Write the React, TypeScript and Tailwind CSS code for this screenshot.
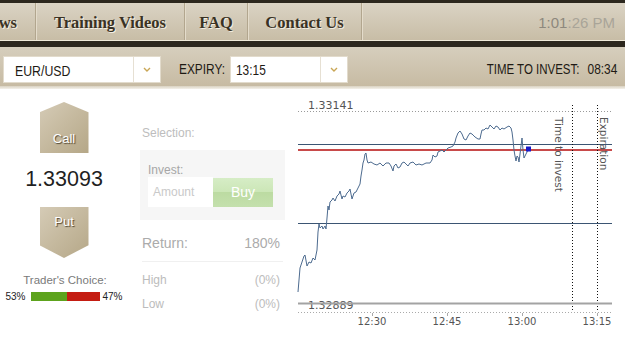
import React from "react";

const pts: [number, number][] = [
  [298, 292], [299, 280], [300, 268], [302, 262], [304, 256], [305, 255], [307, 266], [309, 262], [311, 263], [313, 258], [315, 260], [317, 250], [318, 232], [319, 224], [320, 228], [322, 226], [323, 229], [325, 226], [326, 229], [327, 218], [328, 206], [329, 210], [330, 202], [332, 200], [333, 198], [335, 201], [337, 196], [339, 194], [340, 191], [342, 199], [343, 196], [345, 197], [347, 193], [349, 191], [350, 189], [352, 199], [354, 193], [356, 192], [358, 188], [360, 184], [361, 176], [362, 170], [363, 163], [364, 160], [365, 154], [366, 153], [367, 160], [368, 163], [371, 162], [374, 164], [377, 165], [380, 163], [383, 166], [386, 163], [389, 163], [391, 166], [393, 171], [394, 166], [396, 164], [398, 168], [400, 167], [402, 163], [404, 162], [406, 164], [408, 166], [410, 163], [413, 162], [416, 165], [419, 164], [422, 165], [426, 163], [430, 163], [432, 160], [433, 155], [435, 157], [437, 156], [438, 152], [440, 151], [442, 150], [444, 152], [446, 150], [448, 148], [451, 147], [453, 146], [455, 142], [456, 138], [458, 133], [460, 131], [462, 134], [464, 139], [466, 140], [468, 136], [470, 133], [472, 134], [475, 137], [478, 139], [480, 139], [481, 134], [482, 130], [484, 130], [486, 128], [488, 129], [490, 125], [492, 127], [494, 129], [496, 126], [498, 127], [500, 130], [502, 128], [504, 129], [507, 127], [509, 126], [511, 128], [512, 132], [513, 140], [514, 150], [515, 156], [516, 161], [517, 156], [518, 157], [519, 162], [520, 154], [521, 146], [522, 138], [523, 150], [524, 158], [525, 156], [526, 154], [527, 152], [528, 150],
];

function Chevron() {
  return (
    <svg width="8" height="5" viewBox="0 0 8 5">
      <polyline points="1,1 4,4 7,1" fill="none" stroke="#c9a655" strokeWidth="1.4" />
    </svg>
  );
}

function Chart() {
  const f = "DejaVu Sans, sans-serif";
  return (
    <svg width="340" height="251" className="block">
      <g transform="translate(-285,-89)">
        <text x="308" y="109" fontSize="11" fill="#555" fontFamily={f}>1.33141</text>
        <line x1="298" x2="612" y1="111.5" y2="111.5" stroke="#9a9a9a" strokeDasharray="1 2" />
        <line x1="298" x2="612" y1="144.5" y2="144.5" stroke="#3b5573" />
        <line x1="298" x2="612" y1="223.5" y2="223.5" stroke="#3b5573" />
        <line x1="298" x2="612" y1="150" y2="150" stroke="#c84a4a" strokeWidth="2" />
        <line x1="572.5" x2="572.5" y1="105" y2="311" stroke="#111" strokeDasharray="1 2" />
        <line x1="597.5" x2="597.5" y1="105" y2="311" stroke="#111" strokeDasharray="1 2" />
        <text transform="translate(555,117) rotate(90)" fontSize="10.5" fill="#555" fontFamily={f}>Time to invest</text>
        <text transform="translate(600,117) rotate(90)" fontSize="10.5" fill="#555" fontFamily={f}>Expiration</text>
        <polyline points={pts.map((p) => p.join(",")).join(" ")} fill="none" stroke="#4d6b8f" strokeWidth="1" />
        <rect x="526" y="146.5" width="5" height="5" fill="#1818c8" />
        <text x="308" y="309" fontSize="11" fill="#555" fontFamily={f}>1.32889</text>
        <line x1="298" x2="612" y1="303.5" y2="303.5" stroke="#a3a3a3" strokeWidth="2" />
        <line x1="298" x2="612" y1="312.5" y2="312.5" stroke="#aaa" strokeDasharray="1 2" />
        {[372.5, 447.5, 522.5, 597.5].map((x) => (
          <line key={x} x1={x} x2={x} y1="313" y2="316" stroke="#aaa" />
        ))}
        {[
          [372, "12:30"],
          [447, "12:45"],
          [522, "13:00"],
          [597, "13:15"],
        ].map(([x, t]) => (
          <text key={t as string} x={x as number} y="324.5" fontSize="10" fill="#555" textAnchor="middle" fontFamily={f}>
            {t}
          </text>
        ))}
      </g>
    </svg>
  );
}

export default function App() {
  const navItem = "h-full flex items-center justify-center pt-[4px] border-r border-[#b2a68e] shadow-[1px_0_0_#e4dccb]";
  return (
    <div className="w-[625px] h-[340px] overflow-hidden bg-white font-['Liberation_Sans',Arial,sans-serif]">
      <div className="h-[3px] bg-[#2c271e]" />
      <nav className="h-[37px] flex items-center bg-gradient-to-b from-[#dad3c4] to-[#c8bda6] font-['Liberation_Serif',serif] font-bold text-[16.5px] text-[#3a3224] [text-shadow:1px_1px_0_#f3eee3]">
        <div className={`${navItem} w-[36px] overflow-hidden justify-end pr-[18px]`}>
          <span className="whitespace-nowrap">News</span>
        </div>
        <div className={`${navItem} w-[149px]`}>Training Videos</div>
        <div className={`${navItem} w-[63px]`}>FAQ</div>
        <div className={`${navItem} w-[114px]`}>Contact Us</div>
        <div className="ml-auto pr-[10px] pt-[3px] font-['Liberation_Sans',Arial,sans-serif] font-normal text-[15px] [text-shadow:none]">
          <span className="text-[#8d887d]">1:01</span>
          <span className="text-[#a9a498]">:26 PM</span>
        </div>
      </nav>
      <div className="h-[1px] bg-[#efe9d9]" />
      <div className="h-[6px] bg-[#2c271e]" />
      <div className="h-[39px] flex items-start pt-[9px] bg-gradient-to-b from-[#d6cebd] to-[#c7bba3] text-[#1e1a14]">
        <div className="ml-[3px] flex h-[27px] bg-white border border-[#e2dbcc]">
          <div className="w-[129px] flex items-center pl-[11px] pt-[3px] text-[15px] overflow-hidden">
            <span className="inline-block whitespace-nowrap origin-left scale-x-[0.82]">EUR/USD</span>
          </div>
          <div className="w-[27px] flex items-center justify-center border-l border-[#e6e0d3]">
            <Chevron />
          </div>
        </div>
        <div className="ml-[18px] w-[51px] h-[27px] flex items-center pt-[1px] text-[14.5px]">
          <span className="inline-block whitespace-nowrap origin-left scale-x-[0.82]">EXPIRY:</span>
        </div>
        <div className="flex h-[27px] bg-white border border-[#e2dbcc]">
          <div className="w-[89px] flex items-center pl-[5px] pt-[3px] text-[14.5px]">
            <span className="inline-block whitespace-nowrap origin-left scale-x-[0.82]">13:15</span>
          </div>
          <div className="w-[27px] flex items-center justify-center border-l border-[#e6e0d3]">
            <Chevron />
          </div>
        </div>
        <div className="ml-auto h-[27px] flex items-center pt-[1px] pr-[8px] text-[14px]">
          <span className="inline-block whitespace-nowrap origin-right scale-x-[0.82]">
            <span>TIME TO INVEST:</span>
            <span className="ml-[10px] text-[14.5px]">08:34</span>
          </span>
        </div>
      </div>
      <div className="h-[3px] bg-gradient-to-b from-[#d9d1c1] to-[#f4f1ea]" />
      <div className="flex">
        <div className="w-[128px] flex flex-col items-center">
          <div className="mt-[13px] w-[49px] h-[51px] bg-gradient-to-br from-[#d5cbb6] to-[#b5a787] [clip-path:polygon(50%_0,100%_20%,100%_100%,0_100%,0_20%)] flex justify-center pt-[29px] text-[13px] leading-[15px] text-white [text-shadow:1px_1px_1px_#4f4430]">
            Call
          </div>
          <div className="mt-[13.5px] h-[24px] leading-[24px] text-[21.5px] text-[#1f1f1f]">1.33093</div>
          <div className="mt-[16.5px] w-[49px] h-[51px] bg-gradient-to-br from-[#d5cbb6] to-[#b5a787] [clip-path:polygon(0_0,100%_0,100%_75%,50%_100%,0_75%)] flex justify-center pt-[7px] text-[13px] leading-[15px] text-white [text-shadow:1px_1px_1px_#4f4430]">
            Put
          </div>
          <div className="mt-[15px] ml-[2px] h-[14px] leading-[14px] text-[11.5px] text-[#7a7a7a]">Trader&apos;s Choice:</div>
          <div className="mt-[4px] flex items-center text-[10px] leading-[11px] text-[#222]">
            <span>53%</span>
            <div className="ml-[5px] w-[36px] h-[9px] bg-[#5da31d]" />
            <div className="w-[33px] h-[9px] bg-[#c41d12]" />
            <span className="ml-[3px]">47%</span>
          </div>
        </div>
        <div className="ml-[12px] w-[145px] flex flex-col">
          <div className="mt-[37px] ml-[2px] h-[14px] leading-[14px] text-[12px] text-[#bdbdbd]">Selection:</div>
          <div className="mt-[10px] h-[70px] bg-[#f6f6f6] pl-[8px] pt-[13px]">
            <div className="h-[14px] leading-[14px] text-[12px] text-[#a6a6a6]">Invest:</div>
            <div className="flex h-[30px]">
              <div className="w-[65px] bg-white flex items-center pl-[5px] text-[12px] text-[#c9c9c9]">Amount</div>
              <div className="mt-[1px] w-[60px] h-[29px] flex items-center justify-center text-[14px] text-white bg-[linear-gradient(#d6edc6_0%,#cbe6b6_50%,#bcdba2_50%,#c4e0ad_100%)]">
                Buy
              </div>
            </div>
          </div>
          <div className="mt-[15px] mx-[2px] flex justify-between h-[16px] leading-[16px] text-[14px] text-[#ababab]">
            <span>Return:</span>
            <span className="mr-[3px]">180%</span>
          </div>
          <div className="mt-[10px] mx-[2px] h-[1px] bg-[#f0f0f0]" />
          <div className="mt-[11px] mx-[2px] flex justify-between h-[14px] leading-[14px] text-[12px] text-[#bcbcbc]">
            <span>High</span>
            <span className="mr-[3px]">(0%)</span>
          </div>
          <div className="mt-[10px] mx-[2px] flex justify-between h-[14px] leading-[14px] text-[12px] text-[#bcbcbc]">
            <span>Low</span>
            <span className="mr-[3px]">(0%)</span>
          </div>
        </div>
        <Chart />
      </div>
    </div>
  );
}
